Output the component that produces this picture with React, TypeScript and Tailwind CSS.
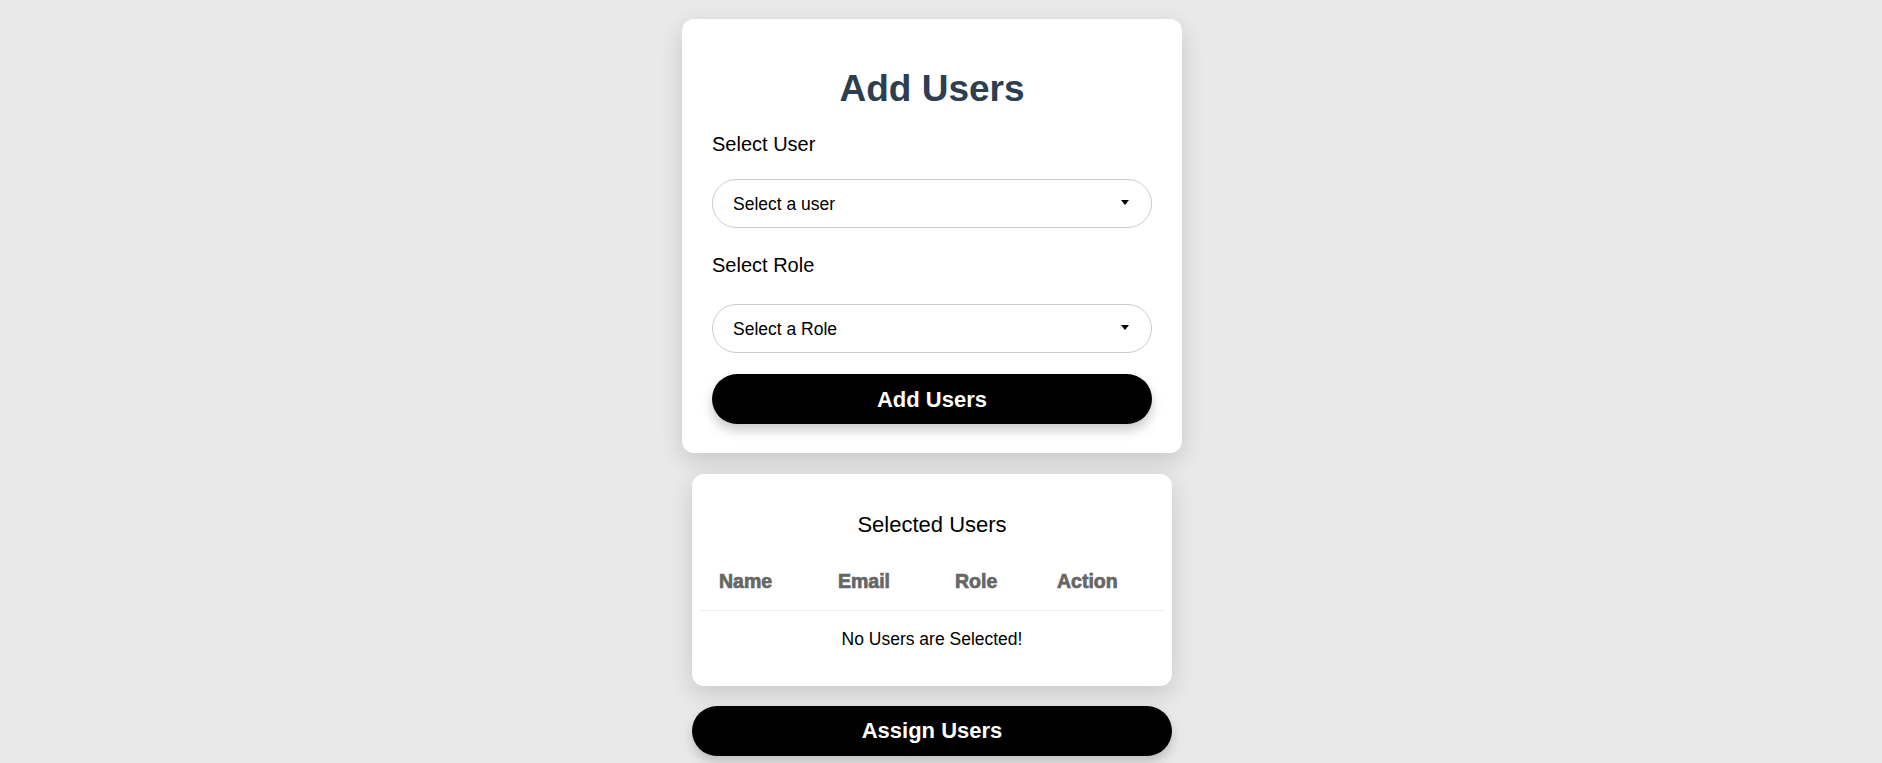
const App = () => {
  return (
    <div className="min-h-screen bg-[#e9e9e9] font-['Liberation_Sans',Arial,sans-serif] text-black">
      <div className="flex flex-col items-center pt-[19px] pr-[18px]">
        <div className="w-[500px] rounded-xl bg-white px-[30px] pt-[48px] pb-[29px] shadow-[0_8px_24px_rgba(0,0,0,0.14)]">
          <h1 className="text-center text-[37px] font-bold leading-[1.2] text-[#2c3e50]">Add Users</h1>

          <label className="mt-[18px] block text-[20px] leading-[1.5]">Select User</label>
          <div className="relative mt-[20px]">
            <select className="h-[49px] w-full appearance-none rounded-full border border-[#cccccc] bg-white pl-[20px] text-[17.5px] outline-none">
              <option>Select a user</option>
            </select>
            <svg className="pointer-events-none absolute right-[23px] top-[21px]" width="8" height="5" viewBox="0 0 8 5">
              <path d="M0 0h8L4 5z" fill="#000" />
            </svg>
          </div>

          <label className="mt-[22px] block text-[20px] leading-[1.5]">Select Role</label>
          <div className="relative mt-[24px]">
            <select className="h-[49px] w-full appearance-none rounded-full border border-[#cccccc] bg-white pl-[20px] text-[17.5px] outline-none">
              <option>Select a Role</option>
            </select>
            <svg className="pointer-events-none absolute right-[23px] top-[21px]" width="8" height="5" viewBox="0 0 8 5">
              <path d="M0 0h8L4 5z" fill="#000" />
            </svg>
          </div>

          <button className="mt-[21px] h-[50px] w-full rounded-full bg-black text-[22px] font-bold text-white shadow-[0_6px_12px_rgba(0,0,0,0.22)]">
            Add Users
          </button>
        </div>

        <div className="mt-[21px] w-[480px] rounded-xl bg-white px-[7px] pt-[34px] pb-[19px] shadow-[0_8px_24px_rgba(0,0,0,0.14)]">
          <h2 className="text-center text-[22px] leading-[1.5]">Selected Users</h2>
          <table className="mt-[13px] w-full table-fixed border-collapse">
            <thead>
              <tr className="border-b border-[#eeeeee]">
                <th className="w-[119px] pt-[13px] pb-[13px] pl-5 text-left text-[19.5px] font-bold leading-[1.5] text-[#666666] [-webkit-text-stroke:0.7px_#666666]">Name</th>
                <th className="w-[117px] pt-[13px] pb-[13px] pl-5 text-left text-[19.5px] font-bold leading-[1.5] text-[#666666] [-webkit-text-stroke:0.7px_#666666]">Email</th>
                <th className="w-[102px] pt-[13px] pb-[13px] pl-5 text-left text-[19.5px] font-bold leading-[1.5] text-[#666666] [-webkit-text-stroke:0.7px_#666666]">Role</th>
                <th className="pt-[13px] pb-[13px] pl-5 text-left text-[19.5px] font-bold leading-[1.5] text-[#666666] [-webkit-text-stroke:0.7px_#666666]">Action</th>
              </tr>
            </thead>
            <tbody>
              <tr>
                <td colSpan={4} className="py-[15px] text-center text-[17.5px] leading-[1.5]">
                  No Users are Selected!
                </td>
              </tr>
            </tbody>
          </table>
        </div>

        <button className="mt-[20px] h-[50px] w-[480px] rounded-full bg-black text-[22px] font-bold text-white shadow-[0_6px_12px_rgba(0,0,0,0.18)]">
          Assign Users
        </button>
      </div>
    </div>
  );
};

export default App;
